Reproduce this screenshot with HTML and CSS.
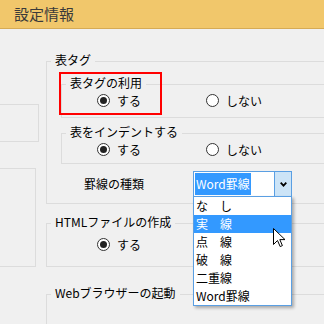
FILE: index.html
```html
<!DOCTYPE html>
<html lang="ja">
<head>
<meta charset="utf-8">
<title>設定情報</title>
<link rel="stylesheet" href="styles.css">
</head>
<body>
<div class="header"><span class="title">設定情報</span></div>
<div class="main">
  <div class="side">
    <div class="sidebox box-a"></div>
    <div class="sidebox box-b"></div>
  </div>
  <div class="content">
    <div class="group g1">
      <div class="legend">表タグ</div>
      <div class="group sub s1">
        <div class="legend">表タグの利用</div>
        <div class="options">
          <label class="opt"><span class="radio on"></span>する</label>
          <label class="opt"><span class="radio"></span>しない</label>
        </div>
      </div>
      <div class="group sub s2">
        <div class="legend">表をインデントする</div>
        <div class="options">
          <label class="opt"><span class="radio on"></span>する</label>
          <label class="opt"><span class="radio"></span>しない</label>
        </div>
      </div>
      <div class="field-row">
        <span class="field-label">罫線の種類</span>
        <div class="combo">
          <div class="combo-box">
            <span class="combo-value">Word罫線</span>
            <span class="combo-btn"><svg width="7" height="5" viewBox="0 0 7 5"><path d="M0.7 0.7 L3.5 3.6 L6.3 0.7" fill="none" stroke="#000" stroke-width="1.8"/></svg></span>
          </div>
          <ul class="combo-list">
            <li>な　し</li>
            <li class="sel">実　線</li>
            <li>点　線</li>
            <li>破　線</li>
            <li>二重線</li>
            <li>Word罫線</li>
          </ul>
        </div>
      </div>
      <div class="annotation"></div>
    </div>
    <div class="group g2">
      <div class="legend">HTMLファイルの作成</div>
      <div class="options opts-wide">
        <label class="opt"><span class="radio on"></span>する</label>
      </div>
    </div>
    <div class="group g3">
      <div class="legend">Webブラウザーの起動</div>
    </div>
  </div>
</div>
<svg class="cursor" width="13" height="20" viewBox="0 0 13 20"><path d="M0.5 0.5 L0.5 16.5 L4.5 12.5 L7.2 18.6 L9.4 17.6 L6.8 11.6 L12 11.6 Z" fill="#fff" stroke="#000" stroke-width="1" stroke-linejoin="miter"/></svg>
</body>
</html>
```
FILE: styles.css
```css
* { box-sizing: border-box; }
html, body { margin: 0; padding: 0; }
body {
  width: 324px;
  height: 324px;
  overflow: hidden;
  position: relative;
  background: #F0F0F0;
  font-family: "Noto Sans CJK JP", "Noto Sans", sans-serif;
  font-size: 12px;
  color: #000;
}
.header {
  height: 29px;
  background: #F1C76B;
  border-bottom: 1px solid #D6AB55;
  padding-left: 14px;
}
.title {
  font-size: 15px;
  line-height: 28px;
  color: #3A3A3A;
}
.main {
  display: flex;
  overflow: hidden;
  height: 295px;
}
.side {
  width: 46px;
  flex-shrink: 0;
  overflow: hidden;
}
.sidebox {
  border: 1px solid #DCDCDC;
  border-left: none;
}
.box-a { margin-top: 75px; width: 39px; height: 38px; }
.box-b { margin-top: 26px; width: 36px; height: 99px; }
.content {
  flex: 1;
  min-width: 0;
}
.group {
  border: 1px solid #DCDCDC;
  border-right: none;
}
.legend {
  width: fit-content;
  margin: -10px 0 0 4px;
  padding: 0 4px;
  background: #F0F0F0;
  line-height: 16px;
  white-space: nowrap;
}
.g1 {
  margin-top: 32px;
  height: 143px;
  position: relative;
}
.sub { margin-left: 14px; }
.s1 { margin-top: 16px; height: 34px; }
.s2 { margin-top: 15px; height: 31px; }
.options {
  display: flex;
  margin: 1px 0 0 35px;
}
.opts-wide { margin: 6px 0 0 50px; }
.opt {
  display: flex;
  align-items: center;
  width: 109px;
  line-height: 17px;
  gap: 7px;
}
.radio {
  width: 13px;
  height: 13px;
  border: 1px solid #333;
  border-radius: 50%;
  background: #fff;
  flex-shrink: 0;
  padding: 2px;
}
.radio.on::after {
  content: "";
  display: block;
  width: 7px;
  height: 7px;
  border-radius: 50%;
  background: #222;
}
.field-row {
  display: flex;
  align-items: center;
  margin-top: 7px;
  height: 26px;
}
.field-label {
  margin-left: 37px;
  width: 109px;
  line-height: 16px;
}
.combo {
  position: relative;
  width: 99px;
  height: 26px;
}
.combo-box {
  display: flex;
  height: 26px;
  border: 1px solid #5A9FE3;
  background: #fff;
}
.combo-value {
  margin: 1px;
  padding: 0 1px;
  height: 22px;
  line-height: 22px;
  background: #3399FF;
  color: #fff;
}
.combo-btn {
  margin-left: auto;
  width: 17px;
  border-left: 1px solid #5A9FE3;
  background: #CCE4F7;
  display: flex;
  align-items: center;
  justify-content: center;
}
.combo-list {
  position: absolute;
  left: 0;
  top: 25px;
  width: 99px;
  height: 110px;
  margin: 0;
  padding: 0;
  list-style: none;
  background: #fff;
  border: 1px solid #5A9FE3;
  box-shadow: 2px 2px 3px rgba(0, 0, 0, 0.3);
  z-index: 2;
}
.combo-list li {
  height: 18px;
  line-height: 18px;
  padding-left: 2px;
  white-space: nowrap;
}
.combo-list li.sel {
  background: #3399FF;
  color: #fff;
}
.annotation {
  position: absolute;
  left: 12px;
  top: 10px;
  width: 103px;
  height: 43px;
  border: 2px solid #FF0000;
}
.g2 { margin-top: 19px; height: 44px; }
.g3 { margin-top: 27px; height: 30px; border-bottom: none; }
.cursor {
  position: absolute;
  left: 273px;
  top: 228px;
  z-index: 3;
}
```
